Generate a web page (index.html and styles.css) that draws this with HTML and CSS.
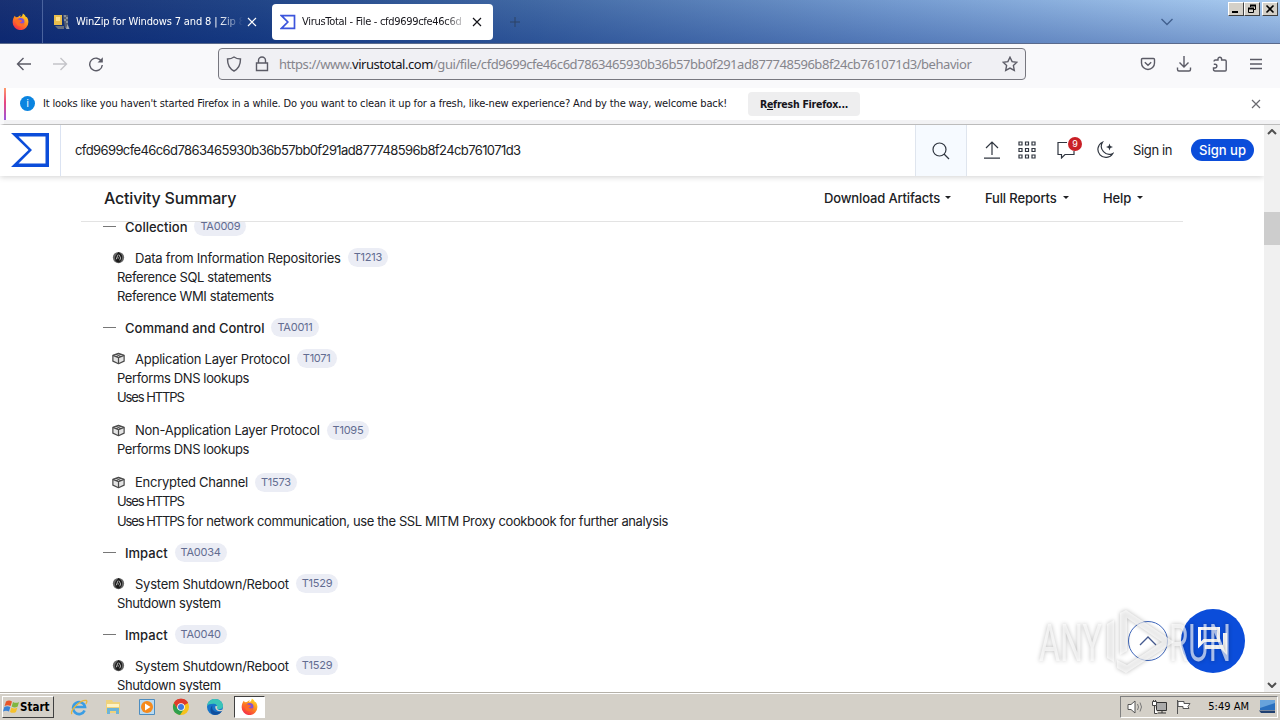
FILE: index.html
```html
<!DOCTYPE html>
<html lang="en">
<head>
  <meta charset="UTF-8" />
  <title>VirusTotal - File</title>
  <link rel="stylesheet" href="styles.css">
</head>
<body>
  <svg class="defs" width="0" height="0">
    <defs>
      <linearGradient id="flame" x1="0.8" y1="0" x2="0.2" y2="1">
        <stop offset="0" stop-color="#ffe226"/>
        <stop offset="0.45" stop-color="#ff8a1d"/>
        <stop offset="1" stop-color="#f5224d"/>
      </linearGradient>
      <symbol id="firefox" viewBox="0 0 16 16">
        <path d="M2.6 2.6l1 1.3 2.1-.2C6.500 2.500 8 2 8.300 2c-.6.8-.6 1.500-.4 1.800C9 3.400 10 2.500 10.200.4c2 1.300 2.600 2.700 3 3.600l.7-.3c1.200 1.700 1.600 3.500 1.500 5A7.400 7.400 0 0 1 .6 8.700C.6 6 1.600 4 2.600 2.600z" fill="url(#flame)"/>
        <circle cx="8.200" cy="8.300" r="3.500" fill="#8052d8"/>
        <path d="M3.400 6.500c1.500-1 3-.6 4.400.2l2 .6c-.8 1.400-2 1.200-2.800 1.500 1.300 1.600 3.300 1 4.600.1-.6 2.600-2.600 3.700-4.700 3.400-2.300-.4-3.900-2.800-3.500-5.800z" fill="#ff6a25"/>
      </symbol>
      <symbol id="cube" viewBox="0 0 16 16">
        <g fill="#e4e4e4" stroke="#4a4a4a" stroke-width="1.300" stroke-linejoin="round">
          <path d="M8 2.400l6 2.200v6.200L8 13.600l-6-2.800V4.600z"/>
          <path d="M2 4.600L8 7l6-2.400M8 7v6.400M5 3.500l6 2.400M11 3.500L5 5.900" fill="none"/>
        </g>
      </symbol>
      <symbol id="blob" viewBox="0 0 16 16">
        <circle cx="8" cy="8" r="6" fill="#666"/>
        <path d="M8 2.200c2 1.500 4.200 3 3.800 5.700 0 3.200-1.700 5.200-3.800 5.500-2.600-.4-4-2.200-3.800-4.800C4.300 6 6.500 4.300 8 2.200z" fill="#1b1b1b"/>
        <path d="M7.500 5l-2 5M8.500 5l1.800 3.500-1 2.500M7 8.500h1.500" stroke="#bbb" fill="none"/>
      </symbol>
    </defs>
  </svg>

  <div class="tab-bar">
    <div class="pinned"><svg width="17" height="17"><use href="#firefox"/></svg></div>
    <div class="tab">
      <svg width="16" height="16" viewBox="0 0 16 16">
        <path d="M9 1h5v13h-3z" fill="#59606f"/>
        <path d="M10 2h2M12 4h2M10 6h2M12 8h2" stroke="#b6bdc9"/>
        <path d="M0 1h8v10H0z" fill="#e9bd4c"/><path d="M2 3h4v4H2z" fill="#ffe08a"/>
        <path d="M1 12h9v3H4z" fill="#687080"/><path d="M12 15l1.500-5 2 5z" fill="#a3a9b5"/>
      </svg>
      <span class="tab-title">WinZip for Windows 7 and 8 | Zip 8</span>
      <svg class="tab-x" width="10" height="10" viewBox="0 0 10 10"><path d="M1 1l8 8M9 1L1 9"/></svg>
    </div>
    <div class="tab active">
      <svg width="16" height="16" viewBox="0 0 16 16"><path d="M1.500 1.700h13v12.600h-13L7.800 8z" fill="none" stroke="#3c55dc" stroke-width="1.700"/></svg>
      <span class="tab-title">VirusTotal - File - cfd9699cfe46c6d</span>
      <svg class="tab-x" width="10" height="10" viewBox="0 0 10 10"><path d="M1 1l8 8M9 1L1 9"/></svg>
    </div>
    <svg class="new-tab" width="10" height="10" viewBox="0 0 10 10"><path d="M5 0v10M0 5h10"/></svg>
    <svg class="all-tabs" width="14" height="8" viewBox="0 0 14 8"><path d="M1.500 1L7 6.500 12.500 1"/></svg>
    <div class="window-buttons">
      <button><svg width="12" height="10" viewBox="0 0 12 10"><path d="M2 8h6" stroke="#000" stroke-width="2"/></svg></button>
      <button><svg width="12" height="10" viewBox="0 0 12 10"><path d="M4.500 3V1.500h5v4H8M2.500 4.500h5v4h-5z" fill="none" stroke="#000"/><path d="M4 1.500h6M2 4.500h6" stroke="#000" stroke-width="1.800"/></svg></button>
      <button class="win-close"><svg width="12" height="10" viewBox="0 0 12 10"><path d="M2.500 1.500l7 7M9.500 1.500l-7 7" stroke="#000" stroke-width="1.600"/></svg></button>
    </div>
  </div>

  <div class="toolbar">
    <div class="nav-icons">
      <svg width="16" height="16" viewBox="0 0 16 16"><path d="M15 8H1.500M7.500 2L1.500 8l6 6"/></svg>
      <svg class="disabled" width="16" height="16" viewBox="0 0 16 16"><path d="M1 8h13.500M8.500 2l6 6-6 6"/></svg>
      <svg width="16" height="16" viewBox="0 0 16 16"><path d="M13.600 5.500A6.300 6.300 0 1 0 14.300 9"/><path d="M14.800 1.200v5.200H9.600z" fill="#5b5b66" stroke="none"/></svg>
    </div>
    <div class="url-bar">
      <svg width="16" height="16" viewBox="0 0 16 16"><path d="M8 1c2 1.500 4 2 6.500 2 0 5-1.500 9.500-6.500 12C3 12.500 1.500 8 1.500 3 4 3 6 2.500 8 1z"/></svg>
      <svg width="14" height="16" viewBox="0 0 14 16"><path d="M3.500 7V4.500a3.500 3.500 0 0 1 7 0V7M1.500 7h11v7.500h-11z"/></svg>
      <span class="url">https://www.<b>virustotal.com</b>/gui/file/cfd9699cfe46c6d7863465930b36b57bb0f291ad877748596b8f24cb761071d3/behavior</span>
      <svg width="16" height="16" viewBox="0 0 16 16"><path d="M8 1.200l2.100 4.400 4.800.6-3.500 3.400.9 4.800L8 12.100l-4.300 2.300.9-4.800L1.100 6.200l4.800-.6z"/></svg>
    </div>
    <div class="tool-icons">
      <svg width="16" height="16" viewBox="0 0 16 16"><path d="M2.500 2.500h11q1 0 1 1V7a6.500 6.500 0 0 1-13 0V3.500q0-1 1-1zM4.800 6.300L8 9.300l3.200-3"/></svg>
      <svg width="16" height="16" viewBox="0 0 16 16"><path d="M8 0v11M3.500 6.500L8 11l4.500-4.500M1.500 11.500v2q0 1.500 1.500 1.500h10q1.500 0 1.500-1.500v-2"/></svg>
      <svg width="16" height="16" viewBox="0 0 16 16"><path d="M2 5.500q0-1.500 1.500-1.500H6V3a1.800 1.800 0 0 1 3.600 0v1H13q1.200 0 1.200 1.200V14q0 1-1 1H3q-1.500 0-1.500-1.500V12H3a1.900 1.900 0 0 0 0-3.800H1.800"/></svg>
      <svg width="14" height="16" viewBox="0 0 14 16"><path d="M1 3.500h12M1 8h12M1 12.500h12"/></svg>
    </div>
  </div>

  <div class="notice">
    <span class="info">i</span>
    <span class="notice-text">It looks like you haven't started Firefox in a while. Do you want to clean it up for a fresh, like-new experience? And by the way, welcome back!</span>
    <button class="refresh">R<u>e</u>fresh Firefox...</button>
    <svg class="notice-x" width="10" height="10" viewBox="0 0 10 10"><path d="M1 1l8 8M9 1L1 9"/></svg>
  </div>

  <div class="viewport">
    <div class="page">
      <header class="vt-header">
        <div class="logo"><svg width="38" height="34" viewBox="0 0 38 34"><path d="M0 0h38v34H0l17.500-17zM7.500 3.500L21 17 7.500 30.500h27v-27z" fill="#0b4dda" fill-rule="evenodd"/></svg></div>
        <div class="search-text">cfd9699cfe46c6d7863465930b36b57bb0f291ad877748596b8f24cb761071d3</div>
        <div class="search-btn"><svg width="18" height="18" viewBox="0 0 18 18"><circle cx="7.500" cy="7.500" r="6.500"/><path d="M12 12l5 5"/></svg></div>
        <div class="header-icons">
          <svg width="16" height="18" viewBox="0 0 16 18"><path d="M8 14V1M2 7l6-6 6 6M0 17.200h16"/></svg>
          <svg width="18" height="18" viewBox="0 0 18 18"><path d="M1 1h3v3H1zM7.500 1h3v3h-3zM14 1h3v3h-3zM1 7.500h3v3H1zM7.500 7.500h3v3h-3zM14 7.500h3v3h-3zM1 14h3v3H1zM7.500 14h3v3h-3zM14 14h3v3h-3z"/></svg>
          <div class="comments">
            <svg width="18" height="18" viewBox="0 0 18 18"><path d="M10 1.500H1v12h3.500V17l3.500-3.500h9V10"/></svg>
            <span class="badge">9</span>
          </div>
          <svg width="18" height="18" viewBox="0 0 18 18"><path d="M6.500 1.200A8 8 0 1 0 16.800 12.500 8 8 0 0 1 6.500 1.200z"/><path d="M13.500 2.500l.9 2.600 2.600.9-2.600.9-.9 2.600-.9-2.600L10 6l2.600-.9z" fill="#303640" stroke="none"/></svg>
          <span class="sign-in">Sign in</span>
          <button class="sign-up">Sign up</button>
        </div>
      </header>

      <div class="summary-bar">
        <h2>Activity Summary</h2>
        <div class="menus">
          <span class="menu m1">Download Artifacts</span>
          <span class="menu m2">Full Reports</span>
          <span class="menu m3">Help</span>
        </div>
      </div>

      <main class="tree">
        <section>
          <div class="tactic"><i></i><span>Collection</span><em>TA0009</em></div>
          <div class="technique"><svg><use href="#blob"/></svg><span>Data from Information Repositories</span><em>T1213</em></div>
          <p>Reference SQL statements</p>
          <p>Reference WMI statements</p>
        </section>
        <section>
          <div class="tactic"><i></i><span>Command and Control</span><em>TA0011</em></div>
          <div class="technique"><svg><use href="#cube"/></svg><span>Application Layer Protocol</span><em>T1071</em></div>
          <p>Performs DNS lookups</p>
          <p class="tight">Uses HTTPS</p>
          <div class="technique"><svg><use href="#cube"/></svg><span>Non-Application Layer Protocol</span><em>T1095</em></div>
          <p>Performs DNS lookups</p>
          <div class="technique"><svg><use href="#cube"/></svg><span>Encrypted Channel</span><em>T1573</em></div>
          <p class="tight">Uses HTTPS</p>
          <p><span class="tight">Uses HTTPS</span> for network communication, use the SSL MITM Proxy cookbook for further analysis</p>
        </section>
        <section>
          <div class="tactic"><i></i><span>Impact</span><em>TA0034</em></div>
          <div class="technique"><svg><use href="#blob"/></svg><span>System Shutdown/Reboot</span><em>T1529</em></div>
          <p>Shutdown system</p>
        </section>
        <section>
          <div class="tactic"><i></i><span>Impact</span><em>TA0040</em></div>
          <div class="technique"><svg><use href="#blob"/></svg><span>System Shutdown/Reboot</span><em>T1529</em></div>
          <p>Shutdown system</p>
        </section>
      </main>

      <button class="to-top"><svg width="18" height="12" viewBox="0 0 18 12"><path d="M1 10l8-8 8 8" fill="none" stroke="#44598f" stroke-width="1.300"/></svg></button>
      <button class="chat"><svg width="32" height="32" viewBox="0 0 32 32"><path d="M2.500 3.500h19v12H7l-4.500 4.500z" fill="none" stroke="#fff" stroke-width="3"/><path d="M26 8h4v22l-6-6H8v-4h18z" fill="#fff"/></svg></button>

      <svg class="watermark" width="200" height="70" viewBox="0 0 200 70">
        <g class="mark">
          <text x="3" y="53" textLength="63" lengthAdjust="spacingAndGlyphs">ANY</text>
          <path d="M71 16l7-4v42l-7-4zM84 5l6-3 48 32-48 31-9-5v-8l10 5 35-23-35-24v33l-7 4z"/>
          <text x="133" y="53" textLength="62" lengthAdjust="spacingAndGlyphs">RUN</text>
        </g>
      </svg>
    </div>
    <div class="scrollbar">
      <svg width="10" height="6" viewBox="0 0 10 6"><path d="M1 5l4-4 4 4"/></svg>
      <div class="thumb"></div>
      <svg width="10" height="6" viewBox="0 0 10 6"><path d="M1 1l4 4 4-4"/></svg>
    </div>
  </div>

  <footer class="taskbar">
    <button class="start">
      <svg width="17" height="16" viewBox="0 0 17 16">
        <path d="M3 2.500q3-2 6 0L7.600 7q-3-1.700-6 0z" fill="#e8562a"/><path d="M10 3q3 1.700 6 0l-1.300 4.600q-3 1.700-6 0z" fill="#7fb641"/>
        <path d="M1.300 8q3-1.700 6 0L6 12.500q-3-1.700-6 0z" fill="#3a83d6"/><path d="M8.400 8.600q3 1.700 6 0L13 13q-3 1.700-6 0z" fill="#f6c12c"/>
      </svg>Start
    </button>
    <div class="quick">
      <svg width="18" height="18" viewBox="0 0 18 18"><path d="M14.600 12.500A6 6 0 1 1 15 9H5" fill="none" stroke="#3a9de4" stroke-width="2.600"/><path d="M2 16C-1 13 11 1 16.500 2.500q1 1-.7 3.500" fill="none" stroke="#e8b63a" stroke-width="1.300"/></svg>
      <svg width="18" height="18" viewBox="0 0 18 18"><path d="M2 2h6l1 2h7v11H2z" fill="#efd27c"/><path d="M3 6h12v3H3z" fill="#fff3c4"/><path d="M3 16v-6h12v6h-3v-3H6v3z" fill="#6db4d8"/></svg>
      <svg width="18" height="18" viewBox="0 0 18 18"><path d="M1.500 1.500h15v15h-15z" fill="#b9daf1" stroke="#4d8dc0"/><circle cx="9" cy="9" r="6" fill="#f58a1c"/><path d="M7 5.500l5.500 3.500L7 12.500z" fill="#fff"/></svg>
      <svg width="18" height="18" viewBox="0 0 18 18"><circle cx="9" cy="9" r="8" fill="#f6c21c"/><path d="M9 9L2 5a8 8 0 0 1 14 0z" fill="#df3b2c"/><path d="M2 5a8 8 0 0 0 6 12l4-6H6z" fill="#2fa04d"/><path d="M2 5a8 8 0 0 1 14 0H9L5 10z" fill="#df3b2c"/><circle cx="9" cy="9" r="3.800" fill="#fff"/><circle cx="9" cy="9" r="3" fill="#3d7be0"/></svg>
      <svg width="18" height="18" viewBox="0 0 18 18"><circle cx="9" cy="9" r="8" fill="#1775c9"/><path d="M1 8C2 3 5 1 9 1c5 0 8 3.500 8 7 0 3-4 4-6.500 2.700C12 9 11 6 8 5.800 5 5.600 2 6.500 1 8z" fill="#3ac4b8"/><path d="M6.500 7.500C5 12 9 15 14 13.500l2-.9c-.6 1.800-3 4.400-7 4.400-3 0-5-3-4.500-6 .2-1.500 1-3 2-3.500z" fill="#0f4f9e"/><path d="M9 8.500q2-1 2.500 0-1.500 2 1 3.200 3 .8 5-.7l-1.500 2q-6 1.500-7-4.500z" fill="#d4d0c8"/></svg>
    </div>
    <div class="task"><svg width="17" height="17"><use href="#firefox"/></svg></div>
    <div class="tray">
      <svg width="18" height="16" viewBox="0 0 18 16"><path d="M1 5.500h3L8 2v12l-4-3.500H1z" fill="#fff" stroke="#555"/><path d="M10.500 5q2 3 0 6M13 3.500q3 4.500 0 9" fill="none" stroke="#777"/></svg>
      <svg width="18" height="16" viewBox="0 0 18 16"><path d="M5.500 3.500h10v8h-10z" fill="#aaa" stroke="#333"/><path d="M7 14h8M11 12v2" stroke="#333"/><path d="M1.500 2.500h4v4h-4zM2.500 1v2M4.500 1v2M3.500 6v8.500h3" fill="#fff" stroke="#444"/></svg>
      <svg width="18" height="16" viewBox="0 0 18 16"><path d="M2.500 15V1M3 2.500h6v2h6l-2 3 1 2H8v-2H3z" fill="#fff" stroke="#555"/></svg>
      <span class="clock">5:49 AM</span>
      <svg width="17" height="15" viewBox="0 0 17 15"><path d="M1 1h15v10H1z" fill="#2a70bf"/><path d="M1 1h15v3L1 9z" fill="#67a3dc"/><path d="M0 11.500h16V14H2z" fill="#1e3f70"/></svg>
    </div>
  </footer>
</body>
</html>
```
FILE: styles.css
```css
* {
  box-sizing: border-box;
}

body {
  margin: 0;
  width: 1280px;
  height: 720px;
  overflow: hidden;
  display: flex;
  flex-direction: column;
  font-family: "DejaVu Sans Condensed", "DejaVu Sans", sans-serif;
  font-size: 11px;
  color: #15141a;
  background: #fff;
}

button {
  font-family: inherit;
  border: none;
  padding: 0;
}

svg {
  flex: none;
  display: block;
}

.defs {
  position: absolute;
}

/* browser tabs */
.tab-bar {
  height: 44px;
  display: flex;
  align-items: center;
  border-bottom: 1px solid #5a6a8c;
  background:
    linear-gradient(to bottom, rgba(255, 255, 255, 0.06), rgba(20, 50, 130, 0.28)),
    linear-gradient(to right, #0a246a 0%, #143a80 20%, #36609f 42%, #6c95cd 70%, #a6caf0 100%);
}

.pinned {
  width: 43px;
  height: 43px;
  padding-left: 12px;
  display: flex;
  align-items: center;
  border-right: 1px solid #4a639e;
}

.tab {
  width: 225px;
  height: 36px;
  margin-left: 3px;
  padding: 0 14px 0 8px;
  display: flex;
  align-items: center;
  color: #fff;
  border-radius: 4px;
}

.tab.active {
  width: 221px;
  margin-left: 1px;
  padding-right: 11px;
  color: #15141a;
  background: #fff;
}

.tab-title {
  flex: 1;
  margin: 0 4px 0 6px;
  overflow: hidden;
  white-space: nowrap;
  letter-spacing: -0.15px;
  -webkit-mask-image: linear-gradient(to right, #000 86%, transparent);
  mask-image: linear-gradient(to right, #000 86%, transparent);
}

.active .tab-title {
  letter-spacing: -0.3px;
}

.tab-x,
.notice-x {
  fill: none;
  stroke: currentColor;
  stroke-width: 1.2;
}

.new-tab {
  margin-left: 17px;
  stroke: #2d4265;
}

.all-tabs {
  margin-left: auto;
  fill: none;
  stroke: #42608f;
  stroke-width: 1.4;
}

.window-buttons {
  align-self: flex-start;
  display: flex;
  margin: 2px 2px 0 54px;
}

.window-buttons button {
  width: 16px;
  height: 14px;
  padding: 1px;
  background: #d4d0c8;
  border: 1px solid;
  border-color: #fff #404040 #404040 #fff;
}

.window-buttons .win-close {
  margin-left: 2px;
}

/* toolbar */
.toolbar {
  height: 44px;
  display: flex;
  align-items: center;
  padding: 0 17px 4px 16px;
  background: #f9f9fb;
}

.toolbar svg {
  fill: none;
  stroke: #5b5b66;
  stroke-width: 1.4;
}

.toolbar .disabled {
  stroke: #c4c4c9;
}

.nav-icons,
.tool-icons {
  display: flex;
  gap: 20px;
}

.url-bar {
  width: 808px;
  height: 32px;
  margin-left: 114px;
  padding: 0 7px;
  display: flex;
  align-items: center;
  background: #f0f0f4;
  border: 1px solid #77777f;
  border-radius: 4px;
}

.url-bar svg + svg {
  margin-left: 13px;
}

.url {
  flex: 1;
  margin-left: 10px;
  font-family: "Noto Sans", sans-serif;
  font-size: 13px;
  letter-spacing: -0.45px;
  color: #85858c;
  white-space: nowrap;
}

.url b {
  font-weight: normal;
  color: #15141a;
}

.tool-icons {
  margin-left: auto;
}

.tool-icons svg:last-child {
  margin-left: 1px;
}

/* refresh notice */
.notice {
  height: 37px;
  padding: 0 19px 5px 16px;
  display: flex;
  align-items: center;
  border-left: 4px solid #f9f9fb;
  border-bottom: 1px solid #bcbcbc;
  background:
    linear-gradient(#f2f2f4, #f2f2f4) bottom / 100% 4px no-repeat,
    linear-gradient(#ff9a6a, #e8457f 45%, #9a55dd) 0 0 / 2px 32px no-repeat,
    #fff;
}

.info {
  width: 15px;
  height: 15px;
  border-radius: 50%;
  background: #0a84e0;
  color: #fff;
  line-height: 15px;
  text-align: center;
}

.notice-text {
  width: 684px;
  margin-left: 8px;
  letter-spacing: -0.145px;
  white-space: nowrap;
}

.refresh {
  width: 112px;
  height: 24px;
  margin-left: 21px;
  border-radius: 4px;
  background: #eeeeef;
  font-size: 10.5px;
  font-weight: bold;
  letter-spacing: -0.25px;
  color: #15141a;
}

.notice-x {
  margin-left: auto;
  color: #6a6a70;
}

/* page */
.viewport {
  flex: 1;
  min-height: 0;
  display: flex;
}

.page {
  position: relative;
  width: 1264px;
  overflow: hidden;
  font-family: Inter, sans-serif;
  font-size: 13px;
  color: #202124;
}

.vt-header {
  position: relative;
  z-index: 2;
  height: 51px;
  display: flex;
  align-items: stretch;
  background: #fff;
  box-shadow: 0 1px 6px rgba(0, 0, 0, 0.18);
}

.logo {
  width: 61px;
  padding: 8px 0 0 11px;
  border-right: 1px solid #dbe3f2;
}

.search-text {
  flex: 1;
  padding-left: 14px;
  line-height: 50px;
  letter-spacing: -0.6px;
}

.search-btn {
  width: 52px;
  display: flex;
  align-items: center;
  justify-content: center;
  background: #f6faff;
  border: solid #dfe5ee;
  border-width: 0 1px;
}

.vt-header svg {
  fill: none;
  stroke: #303640;
  stroke-width: 1.2;
}

.vt-header .logo svg {
  stroke: none;
}

.header-icons {
  width: 297px;
  padding: 0 0 2px 17px;
  display: flex;
  align-items: center;
}

.header-icons > svg:nth-child(2) {
  margin-left: 18px;
}

.comments {
  position: relative;
  margin: 0 21px;
}

.badge {
  position: absolute;
  left: 11px;
  top: -4px;
  width: 14px;
  height: 14px;
  border-radius: 50%;
  background: #c91f26;
  color: #fff;
  font-size: 9px;
  line-height: 14px;
  text-align: center;
}

.sign-in {
  width: 41px;
  margin-left: 19px;
  letter-spacing: -0.35px;
  white-space: nowrap;
}

.sign-up {
  width: 63px;
  height: 22px;
  margin-left: 17px;
  border-radius: 11px;
  background: #0b4dda;
  color: #fff;
  font-size: 13px;
  font-weight: 500;
}

.summary-bar {
  position: relative;
  z-index: 1;
  width: 1102px;
  height: 46px;
  margin-left: 81px;
  padding: 0 40px 2px 23px;
  display: flex;
  align-items: center;
  justify-content: space-between;
  background: #fff;
  border-bottom: 1px solid #e3e3e3;
}

h2 {
  margin: 0;
  font-size: 16px;
  font-weight: 500;
  letter-spacing: -0.2px;
}

.menus {
  display: flex;
  gap: 34px;
  font-weight: 500;
  letter-spacing: -0.15px;
}

.menu {
  display: flex;
  align-items: center;
  justify-content: space-between;
  white-space: nowrap;
}

.m1 { width: 127px; }
.m2 { width: 84px; }
.m3 { width: 40px; }

.menu::after {
  content: "";
  border: 3px solid transparent;
  border-top-color: #202124;
  border-bottom: none;
}

.tree {
  margin-top: -6.5px;
  padding-left: 103px;
}

section {
  margin-bottom: 10.4px;
}

.tactic,
.technique {
  display: flex;
  align-items: center;
}

.tactic {
  height: 22px;
  font-weight: 500;
}

.tactic i {
  width: 13px;
  height: 1px;
  margin-right: 9px;
  background: #777;
}

.technique {
  height: 20px;
  margin-top: 12.5px;
  padding-left: 8px;
}

.tactic + .technique {
  margin-top: 10px;
}

.technique span {
  letter-spacing: -0.25px;
}

.technique svg {
  width: 15px;
  height: 15px;
  margin-right: 9px;
}

em {
  height: 19px;
  margin-left: 7px;
  padding: 0 6px;
  border-radius: 10px;
  background: #ebedf5;
  color: #626c91;
  font-size: 11px;
  font-style: normal;
  font-weight: normal;
  letter-spacing: -0.25px;
  line-height: 19px;
}

p {
  margin: 0;
  padding-left: 14px;
  line-height: 19.5px;
  letter-spacing: -0.38px;
  white-space: nowrap;
}

.tight {
  letter-spacing: -1.1px;
}

.to-top,
.chat {
  position: absolute;
  border-radius: 50%;
  display: flex;
  align-items: center;
  justify-content: center;
}

.to-top {
  left: 1128px;
  top: 496px;
  width: 40px;
  height: 40px;
  background: #fff;
  border: 1px solid #3e66bb;
}

.chat {
  left: 1181px;
  top: 484px;
  width: 64px;
  height: 64px;
  background: #0b4dda;
}

.watermark {
  position: absolute;
  left: 1036px;
  top: 483px;
  filter: drop-shadow(0 0 2px rgba(0, 0, 0, 0.4));
}

.mark {
  fill: #fff;
  fill-opacity: 0.65;
  font-family: Roboto, sans-serif;
  font-size: 52px;
}

/* scrollbar */
.scrollbar {
  width: 16px;
  padding: 4px 0;
  display: flex;
  flex-direction: column;
  align-items: center;
  background: #f0f0f0;
}

.scrollbar svg {
  fill: none;
  stroke: #505050;
  stroke-width: 2;
}

.thumb {
  width: 16px;
  height: 33px;
  margin: 77px 0 auto;
  background: #cdcdcd;
}

/* taskbar */
.taskbar {
  height: 28px;
  display: flex;
  align-items: center;
  padding: 0 2px;
  background: #d4d0c8;
  border-top: 1px solid #b5b1a9;
  box-shadow: inset 0 1px #fff;
}

.start {
  width: 52px;
  height: 22px;
  margin-top: 1px;
  display: flex;
  align-items: center;
  background: #d4d0c8;
  border: 1px solid;
  border-color: #fff #404040 #404040 #fff;
  font-size: 11.5px;
  font-weight: bold;
  color: #000;
}

.quick {
  margin-left: 16px;
  display: flex;
  gap: 16px;
}

.task {
  width: 31px;
  height: 22px;
  margin-left: 10px;
  display: flex;
  align-items: center;
  justify-content: center;
  background: #fff;
  border: 1px solid;
  border-color: #404040 #fff #fff #404040;
}

.tray {
  width: 158px;
  height: 22px;
  margin-left: auto;
  padding: 0 1px 0 6px;
  display: flex;
  align-items: center;
  gap: 6px;
  border: 1px solid;
  border-color: #808080 #fff #fff #808080;
}

.clock {
  margin: 0 4px 0 auto;
  color: #000;
  white-space: nowrap;
}
```
